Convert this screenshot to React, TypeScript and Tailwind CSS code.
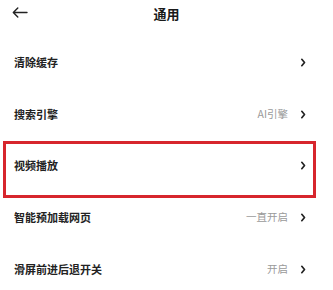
import React from "react";

const rows = [
  { label: "清除缓存", value: "" },
  { label: "搜索引擎", value: "AI引擎" },
  { label: "视频播放", value: "" },
  { label: "智能预加载网页", value: "一直开启" },
  { label: "滑屏前进后退开关", value: "开启" },
];

function Chevron() {
  return (
    <svg width="6" height="9" viewBox="0 0 6 9" className="shrink-0">
      <polyline points="1.8,1.3 4.5,4.5 1.8,7.7" fill="none" stroke="#222" strokeWidth="1.7" strokeLinecap="round" strokeLinejoin="round" />
    </svg>
  );
}

export default function App() {
  return (
    <div
      className="relative w-[333px] h-[290px] bg-white overflow-hidden"
      style={{ fontFamily: '"Noto Sans CJK SC", "Noto Sans", sans-serif' }}
    >
      <div className="relative h-[26px] flex items-center justify-center">
        <svg width="16" height="11" viewBox="0 0 16 11" className="absolute left-[12px] top-[7px]">
          <path d="M15 5.5H1.5M5.8 1L1.3 5.5L5.8 10" fill="none" stroke="#222" strokeWidth="1.4" strokeLinecap="round" strokeLinejoin="round" />
        </svg>
        <span className="text-[13px] font-bold text-[#1a1a1a] leading-none">通用</span>
      </div>
      <div className="pt-[11px]">
        {rows.map((r) => (
          <div key={r.label} className="h-[51.6px] flex items-center pl-[14px] pr-[27px]">
            <span className="text-[11px] font-semibold text-[#222] leading-none">{r.label}</span>
            <div className="ml-auto flex items-center gap-[12px]">
              {r.value && <span className="text-[10.5px] text-[#9a9a9a] leading-none">{r.value}</span>}
              <Chevron />
            </div>
          </div>
        ))}
      </div>
      <div className="absolute left-[2.5px] top-[141px] w-[313.5px] h-[57px] border-[3.5px] border-[#d7262d]" />
    </div>
  );
}
